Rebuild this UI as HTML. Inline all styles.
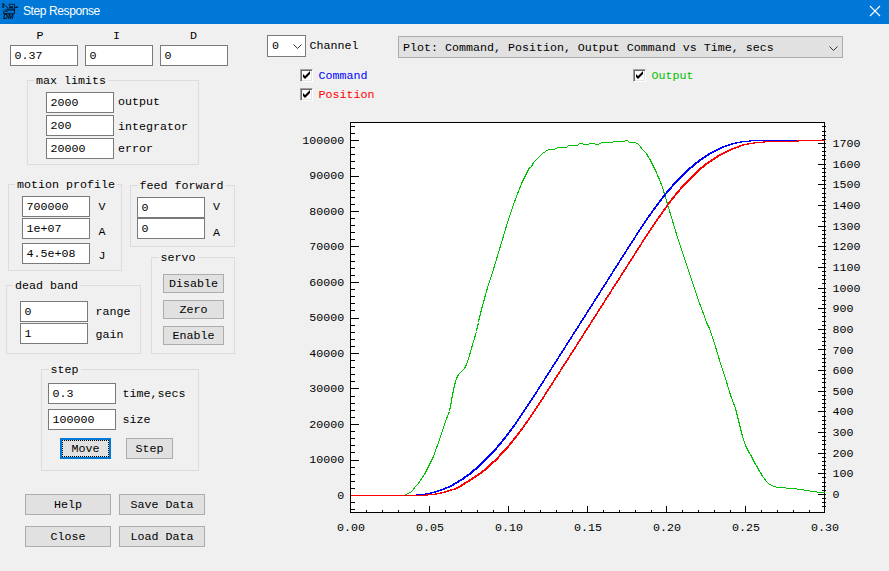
<!DOCTYPE html>
<html><head><meta charset="utf-8"><title>Step Response</title><style>
html,body{margin:0;padding:0}
body{width:889px;height:571px;background:#f0f0f0;position:relative;overflow:hidden;font-family:"Liberation Mono",monospace;font-size:11.67px;color:#000}
#tb{position:absolute;left:0;top:0;width:889px;height:24px;background:#0078d7}
#title{position:absolute;left:23px;top:3px;font-family:"Liberation Sans",sans-serif;font-size:12px;letter-spacing:-0.4px;color:#fff;line-height:16px;white-space:nowrap}
#close{position:absolute;left:869px;top:5px}
#icon{position:absolute;left:0;top:0}
.t{position:absolute;line-height:14px;white-space:pre}
.in{position:absolute;background:#fff;border:1px solid #7a7a7a}
.in span{position:absolute;left:3.5px;top:3px;line-height:14px;white-space:pre}
.gb{position:absolute;border:1px solid #dcdcdc}
.gl{position:absolute;background:#f0f0f0;line-height:14px;text-align:center;white-space:pre}
.btn{position:absolute;background:#e1e1e1;border:1px solid #adadad;text-align:center;white-space:pre}
.btn.focus{border:2px solid #0078d7}
.btn.focus i{position:absolute;left:0;top:0;right:0;bottom:0;border:1px dotted #000}
.cb{position:absolute;width:13px;height:13px;background:#fff;box-sizing:border-box;border:1px solid;border-color:#a0a0a0 #fff #fff #a0a0a0;box-shadow:inset 1px 1px 0 #696969, inset -1px -1px 0 #e3e3e3}
.cb svg{position:absolute;left:-1px;top:-1px}
.combo1{position:absolute;background:#fff;border:1px solid #7a7a7a}
.combo2{position:absolute;background:#e1e1e1;border:1px solid #adadad}
.combo1 span,.combo2 span{position:absolute;left:4px;top:3px;line-height:14px;white-space:pre}
.combo2 span{top:4px}
</style></head><body>
<div id="tb"></div>
<div id="title">Step Response</div>
<svg id="close" width="12" height="12" viewBox="0 0 12 12"><path d="M1 1 L11 11 M11 1 L1 11" stroke="#fff" stroke-width="1.1" fill="none"/></svg>
<svg id="icon" width="22" height="24" viewBox="0 0 22 24">
<g stroke="#000" fill="none" stroke-width="0.9" stroke-opacity="0.85">
<path d="M3.2 3.2 V8 M2 4.3 H4.4 M2 6.800 H3.8 M4.2 4.700 L8 8"/>
<path d="M9 5.4 V4.300 H14.6 V10.3"/>
<path d="M15 7.400 H18 M17 6.500 V8"/>
<path d="M6.800 9 H14.2"/>
<path d="M5.300 10.100 H14.6 M5.300 10.100 L3.500 11.400 V13.400 H14.500 V10.100"/>
<path d="M5.300 11.500 H7.500"/>
</g>
<rect x="9" y="6.200" width="4.200" height="1.800" fill="#000" fill-opacity="0.8"/>
<text x="3.200" y="18.600" font-family="Liberation Sans, sans-serif" font-size="6.600" font-weight="bold" font-style="italic" fill="#000">DM</text>
</svg>
<div class="t" style="left:36.5px;top:29px;">P</div>
<div class="t" style="left:113px;top:29px;">I</div>
<div class="t" style="left:190px;top:29px;">D</div>
<div class="in" style="left:10px;top:45px;width:66px;height:19px"><span>0.37</span></div>
<div class="in" style="left:85px;top:45px;width:66px;height:19px"><span>0</span></div>
<div class="in" style="left:160px;top:45px;width:66px;height:19px"><span>0</span></div>
<div class="gb" style="left:27px;top:80px;width:170px;height:83px"></div>
<div class="gl" style="left:34px;top:74px;width:74px">max limits</div>
<div class="in" style="left:46px;top:92px;width:66px;height:19px"><span>2000</span></div>
<div class="in" style="left:46px;top:115px;width:66px;height:19px"><span>200</span></div>
<div class="in" style="left:46px;top:138px;width:66px;height:19px"><span>20000</span></div>
<div class="t" style="left:118px;top:95px;">output</div>
<div class="t" style="left:118px;top:120px;">integrator</div>
<div class="t" style="left:118px;top:142px;">error</div>
<div class="gb" style="left:8px;top:184px;width:112px;height:85px"></div>
<div class="gl" style="left:15px;top:178px;width:102px">motion profile</div>
<div class="in" style="left:22px;top:196px;width:66px;height:19px"><span>700000</span></div>
<div class="in" style="left:22px;top:218px;width:66px;height:19px"><span>1e+07</span></div>
<div class="in" style="left:22px;top:243px;width:66px;height:19px"><span>4.5e+08</span></div>
<div class="t" style="left:98.5px;top:199.5px;">V</div>
<div class="t" style="left:98.5px;top:225px;">A</div>
<div class="t" style="left:98.5px;top:248.5px;">J</div>
<div class="gb" style="left:130px;top:185px;width:103px;height:60px"></div>
<div class="gl" style="left:137.5px;top:179px;width:88px">feed forward</div>
<div class="in" style="left:137px;top:197px;width:66px;height:19px"><span>0</span></div>
<div class="in" style="left:137px;top:218px;width:66px;height:19px"><span>0</span></div>
<div class="t" style="left:213px;top:199.5px;">V</div>
<div class="t" style="left:213px;top:226px;">A</div>
<div class="gb" style="left:151px;top:257px;width:82px;height:95px"></div>
<div class="gl" style="left:158.5px;top:251px;width:39px">servo</div>
<div class="btn" style="left:163px;top:274px;width:59px;height:17px;line-height:19px">Disable</div>
<div class="btn" style="left:163px;top:300px;width:59px;height:17px;line-height:19px">Zero</div>
<div class="btn" style="left:163px;top:326px;width:59px;height:17px;line-height:19px">Enable</div>
<div class="gb" style="left:6px;top:285px;width:133px;height:67px"></div>
<div class="gl" style="left:13px;top:279px;width:67px">dead band</div>
<div class="in" style="left:20px;top:301px;width:66px;height:19px"><span>0</span></div>
<div class="in" style="left:20px;top:323px;width:66px;height:19px"><span>1</span></div>
<div class="t" style="left:95.5px;top:304.5px;">range</div>
<div class="t" style="left:95.5px;top:327.5px;">gain</div>
<div class="gb" style="left:41px;top:369px;width:156px;height:100px"></div>
<div class="gl" style="left:48.5px;top:363px;width:32px">step</div>
<div class="in" style="left:48px;top:383px;width:66px;height:19px"><span>0.3</span></div>
<div class="in" style="left:48px;top:409px;width:66px;height:19px"><span>100000</span></div>
<div class="t" style="left:122.5px;top:387px;">time,secs</div>
<div class="t" style="left:122.5px;top:412.5px;">size</div>
<div class="btn focus" style="left:60px;top:438px;width:47px;height:17px;line-height:19px"><i></i>Move</div>
<div class="btn" style="left:126px;top:438px;width:45px;height:19px;line-height:21px">Step</div>
<div class="btn" style="left:25px;top:494px;width:84px;height:19px;line-height:21px">Help</div>
<div class="btn" style="left:119px;top:494px;width:84px;height:19px;line-height:21px">Save Data</div>
<div class="btn" style="left:25px;top:526px;width:84px;height:19px;line-height:21px">Close</div>
<div class="btn" style="left:119px;top:526px;width:84px;height:19px;line-height:21px">Load Data</div>
<div class="combo1" style="left:267px;top:35px;width:37px;height:20px"><span>0</span><svg width="10" height="6" viewBox="0 0 10 6" style="position:absolute;left:25px;top:8px"><path d="M0.5 0.5 L4.5 4.500 L8.5 0.5" stroke="#333" stroke-width="1" fill="none"/></svg></div>
<div class="t" style="left:309.5px;top:39px;">Channel</div>
<div class="combo2" style="left:398px;top:36px;width:443px;height:20px"><span>Plot: Command, Position, Output Command vs Time, secs</span><svg width="10" height="6" viewBox="0 0 10 6" style="position:absolute;left:430px;top:8.5px"><path d="M0.5 0.5 L4.5 4.500 L8.5 0.5" stroke="#333" stroke-width="1" fill="none"/></svg></div>
<div class="cb" style="left:300px;top:69px"><svg width="13" height="13" viewBox="0 0 13 13"><path d="M3 5 L3 8 L5 10 L10 5 L10 2 L5 7 Z" fill="#000"/></svg></div>
<div class="t" style="left:318.5px;top:68.5px;color:#0000ff;">Command</div>
<div class="cb" style="left:300px;top:88px"><svg width="13" height="13" viewBox="0 0 13 13"><path d="M3 5 L3 8 L5 10 L10 5 L10 2 L5 7 Z" fill="#000"/></svg></div>
<div class="t" style="left:318.5px;top:87.5px;color:#ff0000;">Position</div>
<div class="cb" style="left:633px;top:69px"><svg width="13" height="13" viewBox="0 0 13 13"><path d="M3 5 L3 8 L5 10 L10 5 L10 2 L5 7 Z" fill="#000"/></svg></div>
<div class="t" style="left:651.5px;top:68.5px;color:#00c000;">Output</div>
<svg id="plot" width="889" height="571" viewBox="0 0 889 571" style="position:absolute;left:0;top:0">
<rect x="350" y="122" width="475" height="391" fill="#fff"/>
<path d="M350.5 122 V513 M824.5 122 V513 M350 122.5 H825 M350 512.5 H825 M351 509.5 h4 M351 502.5 h4 M351 495.5 h8 M351 488.5 h4 M351 481.5 h4 M351 474.5 h4 M351 467.5 h4 M351 460.5 h8 M351 452.5 h4 M351 445.5 h4 M351 438.5 h4 M351 431.5 h4 M351 424.5 h8 M351 417.5 h4 M351 410.5 h4 M351 403.5 h4 M351 396.5 h4 M351 388.5 h8 M351 381.5 h4 M351 374.5 h4 M351 367.5 h4 M351 360.5 h4 M351 353.5 h8 M351 346.5 h4 M351 339.5 h4 M351 332.5 h4 M351 325.5 h4 M351 318.5 h8 M351 310.5 h4 M351 303.5 h4 M351 296.5 h4 M351 289.5 h4 M351 282.5 h8 M351 275.5 h4 M351 268.5 h4 M351 261.5 h4 M351 254.5 h4 M351 246.5 h8 M351 239.5 h4 M351 232.5 h4 M351 225.5 h4 M351 218.5 h4 M351 211.5 h8 M351 204.5 h4 M351 197.5 h4 M351 190.5 h4 M351 183.5 h4 M351 176.5 h8 M351 168.5 h4 M351 161.5 h4 M351 154.5 h4 M351 147.5 h4 M351 140.5 h8 M351 133.5 h4 M351 126.5 h4 M826 506.5 h-4 M826 502.5 h-4 M826 498.5 h-4 M826 494.5 h-8 M826 490.5 h-4 M826 486.5 h-4 M826 482.5 h-4 M826 477.5 h-4 M826 473.5 h-8 M826 469.5 h-4 M826 465.5 h-4 M826 461.5 h-4 M826 457.5 h-4 M826 453.5 h-8 M826 449.5 h-4 M826 444.5 h-4 M826 440.5 h-4 M826 436.5 h-4 M826 432.5 h-8 M826 428.5 h-4 M826 424.5 h-4 M826 420.5 h-4 M826 416.5 h-4 M826 411.5 h-8 M826 407.5 h-4 M826 403.5 h-4 M826 399.5 h-4 M826 395.5 h-4 M826 391.5 h-8 M826 387.5 h-4 M826 382.5 h-4 M826 378.5 h-4 M826 374.5 h-4 M826 370.5 h-8 M826 366.5 h-4 M826 362.5 h-4 M826 358.5 h-4 M826 354.5 h-4 M826 349.5 h-8 M826 345.5 h-4 M826 341.5 h-4 M826 337.5 h-4 M826 333.5 h-4 M826 329.5 h-8 M826 325.5 h-4 M826 321.5 h-4 M826 316.5 h-4 M826 312.5 h-4 M826 308.5 h-8 M826 304.5 h-4 M826 300.5 h-4 M826 296.5 h-4 M826 292.5 h-4 M826 288.5 h-8 M826 283.5 h-4 M826 279.5 h-4 M826 275.5 h-4 M826 271.5 h-4 M826 267.5 h-8 M826 263.5 h-4 M826 259.5 h-4 M826 254.5 h-4 M826 250.5 h-4 M826 246.5 h-8 M826 242.5 h-4 M826 238.5 h-4 M826 234.5 h-4 M826 230.5 h-4 M826 226.5 h-8 M826 221.5 h-4 M826 217.5 h-4 M826 213.5 h-4 M826 209.5 h-4 M826 205.5 h-8 M826 201.5 h-4 M826 197.5 h-4 M826 193.5 h-4 M826 188.5 h-4 M826 184.5 h-8 M826 180.5 h-4 M826 176.5 h-4 M826 172.5 h-4 M826 168.5 h-4 M826 164.5 h-8 M826 159.5 h-4 M826 155.5 h-4 M826 151.5 h-4 M826 147.5 h-4 M826 143.5 h-8 M826 139.5 h-4 M826 135.5 h-4 M826 131.5 h-4 M826 126.5 h-4 M350.5 512 v-6 M366.5 512 v-2 M382.5 512 v-2 M398.5 512 v-2 M414.5 512 v-2 M429.5 512 v-6 M445.5 512 v-2 M461.5 512 v-2 M477.5 512 v-2 M493.5 512 v-2 M508.5 512 v-6 M524.5 512 v-2 M540.5 512 v-2 M556.5 512 v-2 M572.5 512 v-2 M587.5 512 v-6 M603.5 512 v-2 M619.5 512 v-2 M635.5 512 v-2 M651.5 512 v-2 M666.5 512 v-6 M682.5 512 v-2 M698.5 512 v-2 M714.5 512 v-2 M730.5 512 v-2 M745.5 512 v-6 M761.5 512 v-2 M777.5 512 v-2 M793.5 512 v-2 M809.5 512 v-2 M824.5 512 v-6" stroke="#000" stroke-width="1" fill="none" shape-rendering="crispEdges"/>
<g font-family="Liberation Mono, monospace" font-size="11.67" fill="#000">
<text x="344.3" y="498.5" text-anchor="end">0</text>
<text x="344.3" y="463.0" text-anchor="end">10000</text>
<text x="344.3" y="427.5" text-anchor="end">20000</text>
<text x="344.3" y="392.0" text-anchor="end">30000</text>
<text x="344.3" y="356.5" text-anchor="end">40000</text>
<text x="344.3" y="321.0" text-anchor="end">50000</text>
<text x="344.3" y="285.5" text-anchor="end">60000</text>
<text x="344.3" y="250.0" text-anchor="end">70000</text>
<text x="344.3" y="214.5" text-anchor="end">80000</text>
<text x="344.3" y="179.0" text-anchor="end">90000</text>
<text x="344.3" y="143.5" text-anchor="end">100000</text>
<text x="832.5" y="498.0">0</text>
<text x="832.5" y="477.4">100</text>
<text x="832.5" y="456.7">200</text>
<text x="832.5" y="436.1">300</text>
<text x="832.5" y="415.4">400</text>
<text x="832.5" y="394.8">500</text>
<text x="832.5" y="374.1">600</text>
<text x="832.5" y="353.5">700</text>
<text x="832.5" y="332.8">800</text>
<text x="832.5" y="312.1">900</text>
<text x="832.5" y="291.5">1000</text>
<text x="832.5" y="270.9">1100</text>
<text x="832.5" y="250.2">1200</text>
<text x="832.5" y="229.6">1300</text>
<text x="832.5" y="208.9">1400</text>
<text x="832.5" y="188.2">1500</text>
<text x="832.5" y="167.6">1600</text>
<text x="832.5" y="147.0">1700</text>
<text x="351.0" y="531" text-anchor="middle">0.00</text>
<text x="430.0" y="531" text-anchor="middle">0.05</text>
<text x="509.0" y="531" text-anchor="middle">0.10</text>
<text x="588.0" y="531" text-anchor="middle">0.15</text>
<text x="667.0" y="531" text-anchor="middle">0.20</text>
<text x="746.0" y="531" text-anchor="middle">0.25</text>
<text x="825.0" y="531" text-anchor="middle">0.30</text>
</g>
<polyline points="350.5,495.5 351.5,495.5 352.5,495.5 353.5,495.5 354.5,495.5 355.5,495.5 356.5,495.5 357.5,495.5 358.5,495.5 359.5,495.5 360.5,495.5 361.5,495.5 362.5,495.5 363.5,495.5 364.5,495.5 365.5,495.5 366.5,495.5 367.5,495.5 368.5,495.5 369.5,495.5 370.5,495.5 371.5,495.5 372.5,495.5 373.5,495.5 374.5,495.5 375.5,495.5 376.5,495.5 377.5,495.5 378.5,495.5 379.5,495.5 380.5,495.5 381.5,495.5 382.5,495.5 383.5,495.5 384.5,495.5 385.5,495.5 386.5,495.5 387.5,495.5 388.5,495.5 389.5,495.5 390.5,495.5 391.5,495.5 392.5,495.5 393.5,495.5 394.5,495.5 395.5,495.5 396.5,495.5 397.5,495.5 398.5,495.5 399.5,495.5 400.5,495.5 401.5,495.5 402.5,495.5 403.5,495.5 404.5,495.5 405.5,494.5 406.5,494.5 407.5,493.5 408.5,493.5 409.5,492.5 410.5,492.5 411.5,491.5 412.5,490.5 413.5,489.5 414.5,487.5 415.5,486.5 416.5,485.5 417.5,484.5 418.5,483.5 419.5,481.5 420.5,480.5 421.5,478.5 422.5,477.5 423.5,475.5 424.5,474.5 425.5,472.5 426.5,470.5 427.5,468.5 428.5,466.5 429.5,464.5 430.5,462.5 431.5,460.5 432.5,458.5 433.5,456.5 434.5,453.5 435.5,450.5 436.5,447.5 437.5,445.5 438.5,442.5 439.5,439.5 440.5,436.5 441.5,433.5 442.5,430.5 443.5,427.5 444.5,424.5 445.5,421.5 446.5,418.5 447.5,416.5 448.5,413.5 449.5,411.5 450.5,406.5 451.5,400.5 452.5,395.5 453.5,389.5 454.5,385.5 455.5,381.5 456.5,378.5 457.5,376.5 458.5,374.5 459.5,373.5 460.5,372.5 461.5,371.5 462.5,370.5 463.5,369.5 464.5,368.5 465.5,366.5 466.5,364.5 467.5,361.5 468.5,358.5 469.5,355.5 470.5,351.5 471.5,348.5 472.5,344.5 473.5,341.5 474.5,338.5 475.5,334.5 476.5,331.5 477.5,326.5 478.5,322.5 479.5,317.5 480.5,313.5 481.5,309.5 482.5,305.5 483.5,302.5 484.5,298.5 485.5,294.5 486.5,291.5 487.5,287.5 488.5,284.5 489.5,281.5 490.5,278.5 491.5,275.5 492.5,272.5 493.5,269.5 494.5,265.5 495.5,262.5 496.5,259.5 497.5,255.5 498.5,252.5 499.5,249.5 500.5,245.5 501.5,242.5 502.5,239.5 503.5,235.5 504.5,232.5 505.5,229.5 506.5,225.5 507.5,222.5 508.5,219.5 509.5,216.5 510.5,213.5 511.5,210.5 512.5,207.5 513.5,204.5 514.5,201.5 515.5,199.5 516.5,196.5 517.5,193.5 518.5,191.5 519.5,188.5 520.5,186.5 521.5,183.5 522.5,181.5 523.5,179.5 524.5,177.5 525.5,175.5 526.5,173.5 527.5,171.5 528.5,169.5 529.5,167.5 530.5,167.5 531.5,166.5 532.5,164.5 533.5,162.5 534.5,161.5 535.5,160.5 536.5,159.5 537.5,158.5 538.5,157.5 539.5,156.5 540.5,155.5 541.5,154.5 542.5,153.5 543.5,152.5 544.5,152.5 545.5,151.5 546.5,150.5 547.5,150.5 548.5,149.5 549.5,149.5 550.5,149.5 551.5,149.5 552.5,149.5 553.5,149.5 554.5,149.5 555.5,148.5 556.5,148.5 557.5,147.5 558.5,147.5 559.5,147.5 560.5,147.5 561.5,147.5 562.5,147.5 563.5,147.5 564.5,147.5 565.5,147.5 566.5,147.5 567.5,146.5 568.5,145.5 569.5,145.5 570.5,145.5 571.5,145.5 572.5,145.5 573.5,145.5 574.5,145.5 575.5,145.5 576.5,145.5 577.5,145.5 578.5,144.5 579.5,143.5 580.5,143.5 581.5,143.5 582.5,143.5 583.5,144.5 584.5,144.5 585.5,144.5 586.5,144.5 587.5,144.5 588.5,144.5 589.5,143.5 590.5,143.5 591.5,143.5 592.5,143.5 593.5,143.5 594.5,143.5 595.5,144.5 596.5,144.5 597.5,144.5 598.5,144.5 599.5,143.5 600.5,143.5 601.5,142.5 602.5,142.5 603.5,142.5 604.5,142.5 605.5,142.5 606.5,142.5 607.5,142.5 608.5,142.5 609.5,142.5 610.5,142.5 611.5,142.5 612.5,142.5 613.5,141.5 614.5,141.5 615.5,141.5 616.5,141.5 617.5,141.5 618.5,141.5 619.5,141.5 620.5,141.5 621.5,141.5 622.5,141.5 623.5,141.5 624.5,141.5 625.5,140.5 626.5,140.5 627.5,140.5 628.5,141.5 629.5,142.5 630.5,142.5 631.5,142.5 632.5,142.5 633.5,142.5 634.5,142.5 635.5,142.5 636.5,143.5 637.5,143.5 638.5,144.5 639.5,145.5 640.5,146.5 641.5,148.5 642.5,149.5 643.5,150.5 644.5,151.5 645.5,152.5 646.5,153.5 647.5,155.5 648.5,157.5 649.5,158.5 650.5,160.5 651.5,162.5 652.5,164.5 653.5,166.5 654.5,168.5 655.5,170.5 656.5,172.5 657.5,175.5 658.5,177.5 659.5,179.5 660.5,182.5 661.5,184.5 662.5,187.5 663.5,190.5 664.5,194.5 665.5,197.5 666.5,200.5 667.5,204.5 668.5,207.5 669.5,210.5 670.5,214.5 671.5,217.5 672.5,220.5 673.5,224.5 674.5,227.5 675.5,230.5 676.5,234.5 677.5,237.5 678.5,240.5 679.5,243.5 680.5,246.5 681.5,249.5 682.5,252.5 683.5,255.5 684.5,258.5 685.5,261.5 686.5,264.5 687.5,267.5 688.5,270.5 689.5,273.5 690.5,276.5 691.5,279.5 692.5,282.5 693.5,285.5 694.5,288.5 695.5,291.5 696.5,294.5 697.5,297.5 698.5,300.5 699.5,303.5 700.5,305.5 701.5,308.5 702.5,311.5 703.5,313.5 704.5,316.5 705.5,319.5 706.5,322.5 707.5,324.5 708.5,326.5 709.5,328.5 710.5,331.5 711.5,334.5 712.5,337.5 713.5,340.5 714.5,343.5 715.5,346.5 716.5,350.5 717.5,353.5 718.5,356.5 719.5,360.5 720.5,363.5 721.5,366.5 722.5,369.5 723.5,372.5 724.5,375.5 725.5,378.5 726.5,381.5 727.5,385.5 728.5,388.5 729.5,391.5 730.5,395.5 731.5,397.5 732.5,400.5 733.5,403.5 734.5,405.5 735.5,408.5 736.5,412.5 737.5,416.5 738.5,420.5 739.5,424.5 740.5,428.5 741.5,432.5 742.5,436.5 743.5,439.5 744.5,442.5 745.5,445.5 746.5,447.5 747.5,449.5 748.5,451.5 749.5,453.5 750.5,454.5 751.5,456.5 752.5,458.5 753.5,460.5 754.5,462.5 755.5,464.5 756.5,465.5 757.5,467.5 758.5,469.5 759.5,471.5 760.5,472.5 761.5,474.5 762.5,476.5 763.5,477.5 764.5,478.5 765.5,480.5 766.5,481.5 767.5,482.5 768.5,483.5 769.5,484.5 770.5,484.5 771.5,485.5 772.5,485.5 773.5,486.5 774.5,486.5 775.5,486.5 776.5,487.5 777.5,487.5 778.5,487.5 779.5,487.5 780.5,487.5 781.5,487.5 782.5,487.5 783.5,487.5 784.5,487.5 785.5,487.5 786.5,488.5 787.5,488.5 788.5,488.5 789.5,488.5 790.5,488.5 791.5,488.5 792.5,488.5 793.5,488.5 794.5,488.5 795.5,488.5 796.5,488.5 797.5,489.5 798.5,489.5 799.5,489.5 800.5,489.5 801.5,489.5 802.5,489.5 803.5,489.5 804.5,490.5 805.5,490.5 806.5,490.5 807.5,490.5 808.5,490.5 809.5,490.5 810.5,491.5 811.5,491.5 812.5,491.5 813.5,491.5 814.5,491.5 815.5,491.5 816.5,491.5 817.5,492.5 818.5,492.5 819.5,492.5 820.5,492.5 821.5,492.5 822.5,492.5 823.5,492.5 824.5,492.5" fill="none" stroke="#00c000" stroke-width="1.2" stroke-linejoin="round" shape-rendering="crispEdges"/>
<polyline points="350.5,495.5 351.5,495.5 352.5,495.5 353.5,495.5 354.5,495.5 355.5,495.5 356.5,495.5 357.5,495.5 358.5,495.5 359.5,495.5 360.5,495.5 361.5,495.5 362.5,495.5 363.5,495.5 364.5,495.5 365.5,495.5 366.5,495.5 367.5,495.5 368.5,495.5 369.5,495.5 370.5,495.5 371.5,495.5 372.5,495.5 373.5,495.5 374.5,495.5 375.5,495.5 376.5,495.5 377.5,495.5 378.5,495.5 379.5,495.5 380.5,495.5 381.5,495.5 382.5,495.5 383.5,495.5 384.5,495.5 385.5,495.5 386.5,495.5 387.5,495.5 388.5,495.5 389.5,495.5 390.5,495.5 391.5,495.5 392.5,495.5 393.5,495.5 394.5,495.5 395.5,495.5 396.5,495.5 397.5,495.5 398.5,495.5 399.5,495.5 400.5,495.5 401.5,495.5 402.5,495.5 403.5,495.5 404.5,495.5 405.5,495.5 406.5,495.5 407.5,495.5 408.5,495.5 409.5,495.5 410.5,495.5 411.5,495.5 412.5,495.5 413.5,495.5 414.5,495.5 415.5,495.5 416.5,495.5 417.5,494.5 418.5,494.5 419.5,494.5 420.5,494.5 421.5,494.5 422.5,494.5 423.5,494.5 424.5,494.5 425.5,494.5 426.5,493.5 427.5,493.5 428.5,493.5 429.5,493.5 430.5,493.5 431.5,492.5 432.5,492.5 433.5,492.5 434.5,492.5 435.5,491.5 436.5,491.5 437.5,491.5 438.5,490.5 439.5,490.5 440.5,490.5 441.5,489.5 442.5,489.5 443.5,489.5 444.5,488.5 445.5,488.5 446.5,487.5 447.5,487.5 448.5,487.5 449.5,486.5 450.5,486.5 451.5,485.5 452.5,485.5 453.5,484.5 454.5,483.5 455.5,483.5 456.5,482.5 457.5,482.5 458.5,481.5 459.5,480.5 460.5,480.5 461.5,479.5 462.5,479.5 463.5,478.5 464.5,477.5 465.5,476.5 466.5,476.5 467.5,475.5 468.5,474.5 469.5,474.5 470.5,473.5 471.5,472.5 472.5,471.5 473.5,470.5 474.5,469.5 475.5,469.5 476.5,468.5 477.5,467.5 478.5,466.5 479.5,465.5 480.5,464.5 481.5,463.5 482.5,462.5 483.5,461.5 484.5,460.5 485.5,459.5 486.5,458.5 487.5,457.5 488.5,456.5 489.5,455.5 490.5,454.5 491.5,453.5 492.5,452.5 493.5,451.5 494.5,450.5 495.5,449.5 496.5,448.5 497.5,446.5 498.5,445.5 499.5,444.5 500.5,443.5 501.5,442.5 502.5,440.5 503.5,439.5 504.5,438.5 505.5,437.5 506.5,435.5 507.5,434.5 508.5,433.5 509.5,431.5 510.5,430.5 511.5,429.5 512.5,427.5 513.5,426.5 514.5,425.5 515.5,423.5 516.5,422.5 517.5,420.5 518.5,419.5 519.5,417.5 520.5,416.5 521.5,414.5 522.5,413.5 523.5,411.5 524.5,410.5 525.5,408.5 526.5,407.5 527.5,405.5 528.5,404.5 529.5,402.5 530.5,401.5 531.5,399.5 532.5,398.5 533.5,396.5 534.5,395.5 535.5,393.5 536.5,392.5 537.5,390.5 538.5,388.5 539.5,387.5 540.5,385.5 541.5,384.5 542.5,382.5 543.5,381.5 544.5,379.5 545.5,377.5 546.5,376.5 547.5,374.5 548.5,373.5 549.5,371.5 550.5,370.5 551.5,368.5 552.5,366.5 553.5,365.5 554.5,363.5 555.5,362.5 556.5,360.5 557.5,359.5 558.5,357.5 559.5,355.5 560.5,354.5 561.5,352.5 562.5,351.5 563.5,349.5 564.5,348.5 565.5,346.5 566.5,344.5 567.5,343.5 568.5,341.5 569.5,340.5 570.5,338.5 571.5,337.5 572.5,335.5 573.5,333.5 574.5,332.5 575.5,330.5 576.5,329.5 577.5,327.5 578.5,326.5 579.5,324.5 580.5,322.5 581.5,321.5 582.5,319.5 583.5,318.5 584.5,316.5 585.5,315.5 586.5,313.5 587.5,311.5 588.5,310.5 589.5,308.5 590.5,307.5 591.5,305.5 592.5,304.5 593.5,302.5 594.5,300.5 595.5,299.5 596.5,297.5 597.5,296.5 598.5,294.5 599.5,293.5 600.5,291.5 601.5,289.5 602.5,288.5 603.5,286.5 604.5,285.5 605.5,283.5 606.5,282.5 607.5,280.5 608.5,278.5 609.5,277.5 610.5,275.5 611.5,274.5 612.5,272.5 613.5,270.5 614.5,269.5 615.5,267.5 616.5,266.5 617.5,264.5 618.5,263.5 619.5,261.5 620.5,259.5 621.5,258.5 622.5,256.5 623.5,255.5 624.5,253.5 625.5,252.5 626.5,250.5 627.5,248.5 628.5,247.5 629.5,245.5 630.5,244.5 631.5,242.5 632.5,241.5 633.5,239.5 634.5,238.5 635.5,236.5 636.5,234.5 637.5,233.5 638.5,231.5 639.5,230.5 640.5,228.5 641.5,227.5 642.5,225.5 643.5,224.5 644.5,222.5 645.5,221.5 646.5,219.5 647.5,218.5 648.5,216.5 649.5,215.5 650.5,214.5 651.5,212.5 652.5,211.5 653.5,209.5 654.5,208.5 655.5,207.5 656.5,205.5 657.5,204.5 658.5,203.5 659.5,201.5 660.5,200.5 661.5,199.5 662.5,197.5 663.5,196.5 664.5,195.5 665.5,194.5 666.5,192.5 667.5,191.5 668.5,190.5 669.5,189.5 670.5,188.5 671.5,187.5 672.5,185.5 673.5,184.5 674.5,183.5 675.5,182.5 676.5,181.5 677.5,180.5 678.5,179.5 679.5,178.5 680.5,177.5 681.5,176.5 682.5,175.5 683.5,174.5 684.5,173.5 685.5,172.5 686.5,171.5 687.5,170.5 688.5,169.5 689.5,168.5 690.5,167.5 691.5,167.5 692.5,166.5 693.5,165.5 694.5,164.5 695.5,163.5 696.5,162.5 697.5,162.5 698.5,161.5 699.5,160.5 700.5,159.5 701.5,159.5 702.5,158.5 703.5,157.5 704.5,157.5 705.5,156.5 706.5,155.5 707.5,155.5 708.5,154.5 709.5,153.5 710.5,153.5 711.5,152.5 712.5,152.5 713.5,151.5 714.5,151.5 715.5,150.5 716.5,150.5 717.5,149.5 718.5,149.5 719.5,148.5 720.5,148.5 721.5,147.5 722.5,147.5 723.5,146.5 724.5,146.5 725.5,146.5 726.5,145.5 727.5,145.5 728.5,145.5 729.5,144.5 730.5,144.5 731.5,144.5 732.5,143.5 733.5,143.5 734.5,143.5 735.5,143.5 736.5,142.5 737.5,142.5 738.5,142.5 739.5,142.5 740.5,142.5 741.5,141.5 742.5,141.5 743.5,141.5 744.5,141.5 745.5,141.5 746.5,141.5 747.5,141.5 748.5,141.5 749.5,141.5 750.5,140.5 751.5,140.5 752.5,140.5 753.5,140.5 754.5,140.5 755.5,140.5 756.5,140.5 757.5,140.5 758.5,140.5 759.5,140.5 760.5,140.5 761.5,140.5 762.5,140.5 763.5,140.5 764.5,140.5 765.5,140.5 766.5,140.5 767.5,140.5 768.5,140.5 769.5,140.5 770.5,140.5 771.5,140.5 772.5,140.5 773.5,140.5 774.5,140.5 775.5,140.5 776.5,140.5 777.5,140.5 778.5,140.5 779.5,140.5 780.5,140.5 781.5,140.5 782.5,140.5 783.5,140.5 784.5,140.5 785.5,140.5 786.5,140.5 787.5,140.5 788.5,140.5 789.5,140.5 790.5,140.5 791.5,140.5 792.5,140.5 793.5,140.5 794.5,140.5 795.5,140.5 796.5,140.5 797.5,140.5" fill="none" stroke="#0000ff" stroke-width="1.5" stroke-linejoin="round" shape-rendering="crispEdges"/>
<polyline points="350.5,495.5 351.5,495.5 352.5,495.5 353.5,495.5 354.5,495.5 355.5,495.5 356.5,495.5 357.5,495.5 358.5,495.5 359.5,495.5 360.5,495.5 361.5,495.5 362.5,495.5 363.5,495.5 364.5,495.5 365.5,495.5 366.5,495.5 367.5,495.5 368.5,495.5 369.5,495.5 370.5,495.5 371.5,495.5 372.5,495.5 373.5,495.5 374.5,495.5 375.5,495.5 376.5,495.5 377.5,495.5 378.5,495.5 379.5,495.5 380.5,495.5 381.5,495.5 382.5,495.5 383.5,495.5 384.5,495.5 385.5,495.5 386.5,495.5 387.5,495.5 388.5,495.5 389.5,495.5 390.5,495.5 391.5,495.5 392.5,495.5 393.5,495.5 394.5,495.5 395.5,495.5 396.5,495.5 397.5,495.5 398.5,495.5 399.5,495.5 400.5,495.5 401.5,495.5 402.5,495.5 403.5,495.5 404.5,495.5 405.5,495.5 406.5,495.5 407.5,495.5 408.5,495.5 409.5,495.5 410.5,495.5 411.5,495.5 412.5,495.5 413.5,495.5 414.5,495.5 415.5,495.5 416.5,495.5 417.5,495.5 418.5,495.5 419.5,495.5 420.5,495.5 421.5,495.5 422.5,495.5 423.5,495.5 424.5,495.5 425.5,495.5 426.5,495.5 427.5,494.5 428.5,494.5 429.5,494.5 430.5,494.5 431.5,494.5 432.5,494.5 433.5,494.5 434.5,494.5 435.5,494.5 436.5,493.5 437.5,493.5 438.5,493.5 439.5,493.5 440.5,493.5 441.5,492.5 442.5,492.5 443.5,492.5 444.5,492.5 445.5,491.5 446.5,491.5 447.5,491.5 448.5,490.5 449.5,490.5 450.5,490.5 451.5,489.5 452.5,489.5 453.5,489.5 454.5,489.5 455.5,488.5 456.5,488.5 457.5,487.5 458.5,487.5 459.5,486.5 460.5,486.5 461.5,485.5 462.5,484.5 463.5,484.5 464.5,483.5 465.5,482.5 466.5,482.5 467.5,481.5 468.5,481.5 469.5,480.5 470.5,479.5 471.5,479.5 472.5,478.5 473.5,477.5 474.5,477.5 475.5,476.5 476.5,475.5 477.5,475.5 478.5,474.5 479.5,473.5 480.5,473.5 481.5,472.5 482.5,471.5 483.5,470.5 484.5,470.5 485.5,469.5 486.5,468.5 487.5,467.5 488.5,466.5 489.5,465.5 490.5,464.5 491.5,463.5 492.5,462.5 493.5,461.5 494.5,461.5 495.5,460.5 496.5,459.5 497.5,458.5 498.5,457.5 499.5,455.5 500.5,454.5 501.5,453.5 502.5,452.5 503.5,451.5 504.5,450.5 505.5,449.5 506.5,448.5 507.5,447.5 508.5,446.5 509.5,444.5 510.5,443.5 511.5,442.5 512.5,441.5 513.5,439.5 514.5,438.5 515.5,437.5 516.5,436.5 517.5,434.5 518.5,433.5 519.5,432.5 520.5,430.5 521.5,429.5 522.5,428.5 523.5,426.5 524.5,425.5 525.5,423.5 526.5,422.5 527.5,421.5 528.5,419.5 529.5,418.5 530.5,416.5 531.5,415.5 532.5,413.5 533.5,412.5 534.5,410.5 535.5,409.5 536.5,407.5 537.5,406.5 538.5,404.5 539.5,403.5 540.5,401.5 541.5,400.5 542.5,398.5 543.5,397.5 544.5,395.5 545.5,393.5 546.5,392.5 547.5,390.5 548.5,389.5 549.5,387.5 550.5,386.5 551.5,384.5 552.5,383.5 553.5,381.5 554.5,379.5 555.5,378.5 556.5,376.5 557.5,375.5 558.5,373.5 559.5,372.5 560.5,370.5 561.5,368.5 562.5,367.5 563.5,365.5 564.5,364.5 565.5,362.5 566.5,361.5 567.5,359.5 568.5,358.5 569.5,356.5 570.5,354.5 571.5,353.5 572.5,351.5 573.5,350.5 574.5,348.5 575.5,347.5 576.5,345.5 577.5,343.5 578.5,342.5 579.5,340.5 580.5,339.5 581.5,337.5 582.5,336.5 583.5,334.5 584.5,332.5 585.5,331.5 586.5,329.5 587.5,328.5 588.5,326.5 589.5,325.5 590.5,323.5 591.5,321.5 592.5,320.5 593.5,318.5 594.5,317.5 595.5,315.5 596.5,314.5 597.5,312.5 598.5,310.5 599.5,309.5 600.5,307.5 601.5,306.5 602.5,304.5 603.5,303.5 604.5,301.5 605.5,299.5 606.5,298.5 607.5,296.5 608.5,295.5 609.5,293.5 610.5,292.5 611.5,290.5 612.5,288.5 613.5,287.5 614.5,285.5 615.5,284.5 616.5,282.5 617.5,281.5 618.5,279.5 619.5,278.5 620.5,276.5 621.5,274.5 622.5,273.5 623.5,271.5 624.5,270.5 625.5,268.5 626.5,267.5 627.5,265.5 628.5,263.5 629.5,262.5 630.5,260.5 631.5,259.5 632.5,257.5 633.5,256.5 634.5,254.5 635.5,252.5 636.5,251.5 637.5,249.5 638.5,248.5 639.5,246.5 640.5,245.5 641.5,243.5 642.5,241.5 643.5,240.5 644.5,238.5 645.5,237.5 646.5,235.5 647.5,234.5 648.5,232.5 649.5,231.5 650.5,229.5 651.5,228.5 652.5,226.5 653.5,225.5 654.5,223.5 655.5,222.5 656.5,220.5 657.5,219.5 658.5,217.5 659.5,216.5 660.5,215.5 661.5,213.5 662.5,212.5 663.5,210.5 664.5,209.5 665.5,208.5 666.5,206.5 667.5,205.5 668.5,203.5 669.5,202.5 670.5,201.5 671.5,199.5 672.5,198.5 673.5,197.5 674.5,196.5 675.5,194.5 676.5,193.5 677.5,192.5 678.5,191.5 679.5,190.5 680.5,188.5 681.5,187.5 682.5,186.5 683.5,185.5 684.5,184.5 685.5,183.5 686.5,182.5 687.5,181.5 688.5,180.5 689.5,179.5 690.5,178.5 691.5,177.5 692.5,176.5 693.5,175.5 694.5,174.5 695.5,173.5 696.5,172.5 697.5,171.5 698.5,170.5 699.5,169.5 700.5,168.5 701.5,167.5 702.5,167.5 703.5,166.5 704.5,165.5 705.5,164.5 706.5,163.5 707.5,163.5 708.5,162.5 709.5,161.5 710.5,161.5 711.5,160.5 712.5,159.5 713.5,159.5 714.5,158.5 715.5,157.5 716.5,157.5 717.5,156.5 718.5,155.5 719.5,155.5 720.5,154.5 721.5,154.5 722.5,153.5 723.5,153.5 724.5,152.5 725.5,152.5 726.5,151.5 727.5,151.5 728.5,150.5 729.5,150.5 730.5,149.5 731.5,149.5 732.5,148.5 733.5,148.5 734.5,148.5 735.5,147.5 736.5,147.5 737.5,147.5 738.5,146.5 739.5,146.5 740.5,145.5 741.5,145.5 742.5,145.5 743.5,144.5 744.5,144.5 745.5,144.5 746.5,144.5 747.5,144.5 748.5,143.5 749.5,143.5 750.5,143.5 751.5,143.5 752.5,143.5 753.5,143.5 754.5,142.5 755.5,142.5 756.5,142.5 757.5,142.5 758.5,142.5 759.5,142.5 760.5,142.5 761.5,142.5 762.5,142.5 763.5,142.5 764.5,141.5 765.5,141.5 766.5,141.5 767.5,141.5 768.5,141.5 769.5,141.5 770.5,141.5 771.5,141.5 772.5,141.5 773.5,141.5 774.5,141.5 775.5,141.5 776.5,141.5 777.5,141.5 778.5,141.5 779.5,141.5 780.5,141.5 781.5,141.5 782.5,141.5 783.5,141.5 784.5,141.5 785.5,141.5 786.5,141.5 787.5,141.5 788.5,141.5 789.5,141.5 790.5,141.5 791.5,141.5 792.5,141.5 793.5,141.5 794.5,141.5 795.5,141.5 796.5,141.5 797.5,141.5 798.5,140.5 799.5,140.5 800.5,140.5 801.5,140.5 802.5,140.5 803.5,140.5 804.5,140.5 805.5,140.5 806.5,140.5 807.5,140.5 808.5,140.5 809.5,140.5 810.5,140.5 811.5,140.5 812.5,140.5 813.5,140.5 814.5,140.5 815.5,140.5 816.5,140.5 817.5,140.5 818.5,140.5 819.5,140.5 820.5,140.5 821.5,140.5 822.5,140.5 823.5,140.5 824.5,140.5" fill="none" stroke="#ff0000" stroke-width="1.5" stroke-linejoin="round" shape-rendering="crispEdges"/>
</svg>
</body></html>
